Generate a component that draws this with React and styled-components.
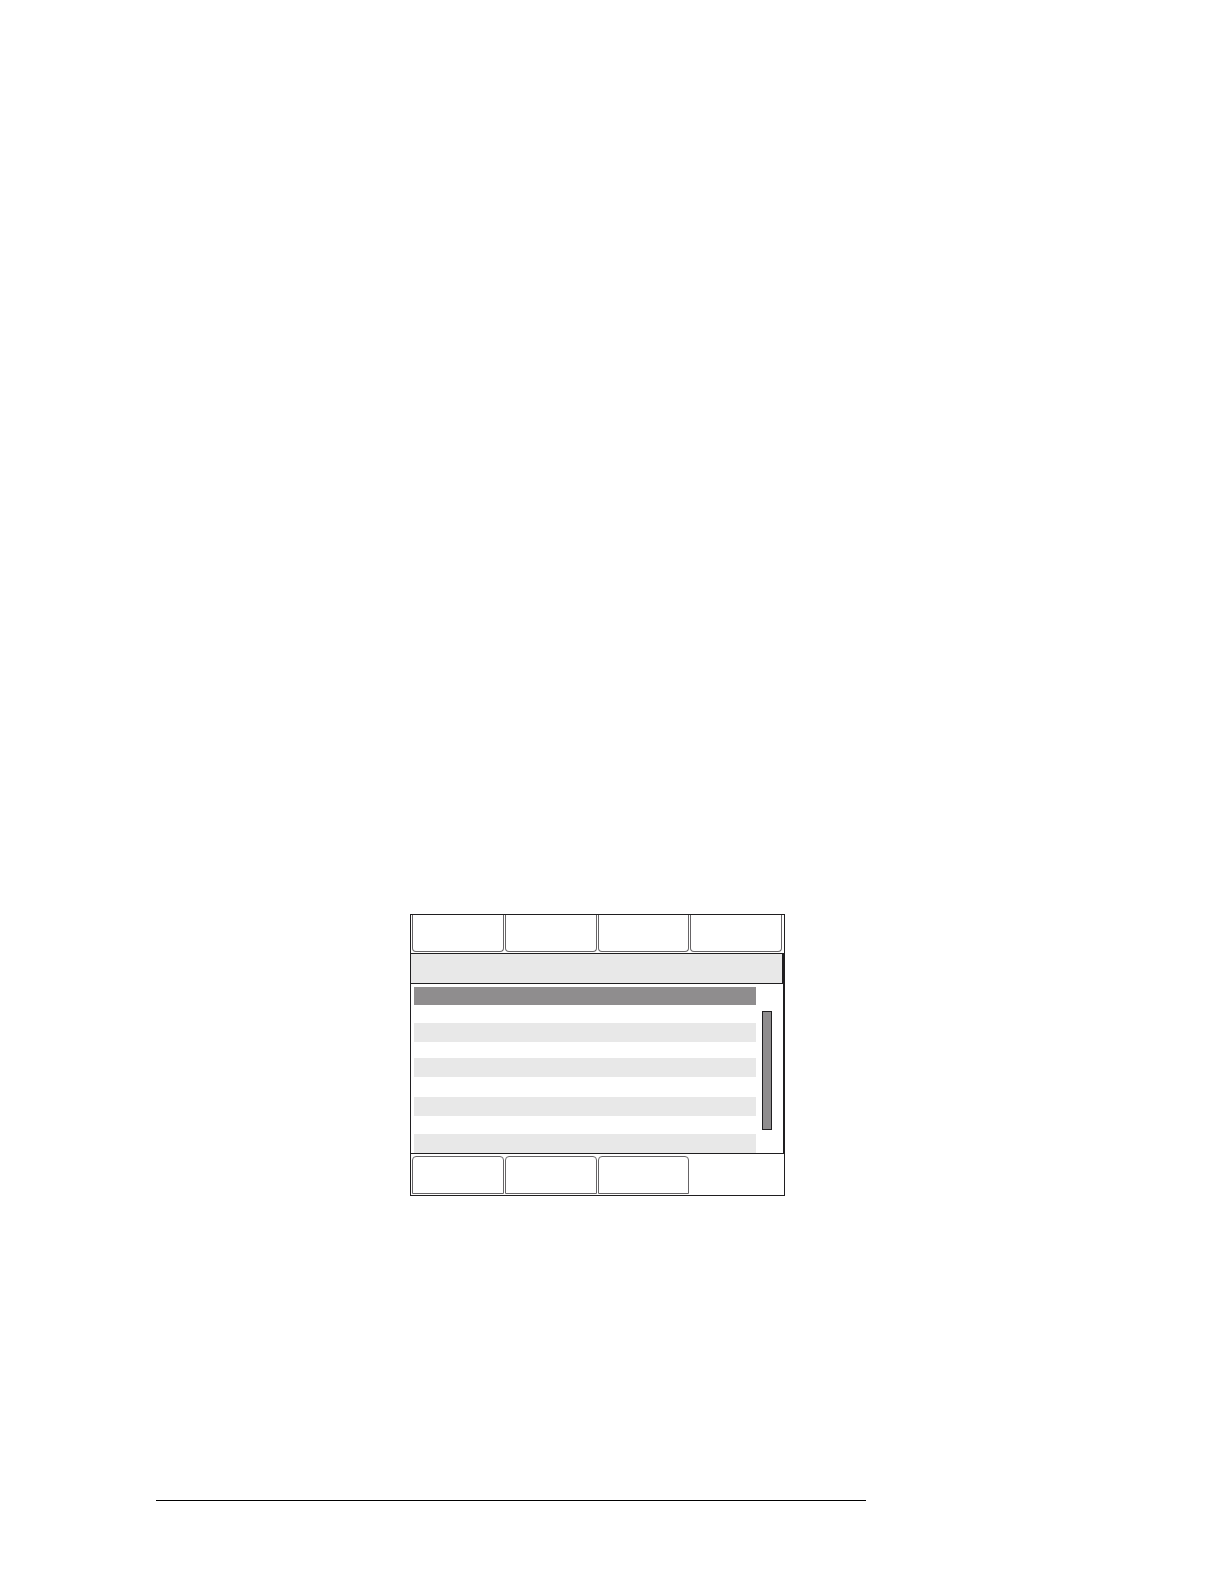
import React from 'react';
import styled, { createGlobalStyle } from 'styled-components';

const colors = {
  line: '#1f1e20',
  key: '#666466',
  selected: '#8f8d8e',
  stripe: '#e8e8e8',
  white: '#ffffff',
};

const topKeys = ['F1', 'F2', 'F3', 'F4'];
const bottomKeys = ['F5', 'F6', 'F7'];
const rows = [0, 1, 2, 3, 4, 5, 6, 7, 8];

const App = () => {
  return (
    <>
      <GlobalStyle />
      <StPage>
        <StScreen>
          <StTopKeys>
            {topKeys.map((key) => (
              <StTopKey key={key} type='button' aria-label={key} />
            ))}
          </StTopKeys>
          <StTitleBar />
          <StBody>
            <StList>
              {rows.map((row) => (
                <StRow key={row} $selected={row === 0} $striped={row % 2 === 0} />
              ))}
            </StList>
            <StScrollThumb />
          </StBody>
          <StBottomKeys>
            {bottomKeys.map((key) => (
              <StBottomKey key={key} type='button' aria-label={key} />
            ))}
          </StBottomKeys>
        </StScreen>
        <StFooterLine />
      </StPage>
    </>
  );
};

export default App;

const GlobalStyle = createGlobalStyle`
  * {
    box-sizing: border-box;
  }

  body {
    margin: 0;
    background: ${colors.white};
    font-family: 'Liberation Sans', sans-serif;
  }
`;

const StPage = styled.main`
  display: flex;
  flex-direction: column;
  justify-content: flex-end;
  min-height: 100vh;
  padding: 0 0 83px 156px;
`;

const StScreen = styled.section`
  width: 100%;
  max-width: 375px;
  margin: 0 0 304px 254px;
  border: 1px solid ${colors.line};
`;

const StKeys = styled.div`
  display: grid;
  grid-template-columns: repeat(4, 1fr);
  gap: 1px;
`;

const StTopKeys = styled(StKeys)`
  padding: 0 2px 1px 1px;
`;

const StBottomKeys = styled(StKeys)`
  padding: 2px 2px 1px 1px;
`;

const StKey = styled.button`
  padding: 0;
  background: ${colors.white};
  border: 1px solid ${colors.key};
`;

const StTopKey = styled(StKey)`
  height: 37px;
  border-top: none;
  border-radius: 0 0 4px 4px;
`;

const StBottomKey = styled(StKey)`
  height: 38px;
  border-radius: 4px 4px 0 0;
`;

const StTitleBar = styled.header`
  height: 31px;
  background: ${colors.stripe};
  border: 1px solid ${colors.line};
  border-width: 1px 2px 1px 0;
`;

const StBody = styled.div`
  display: flex;
  gap: 6px;
  padding: 3px 11px 0 3px;
  border: 1px solid ${colors.line};
  border-width: 0 1px 1px 0;
`;

const StList = styled.ul`
  flex: 1;
  display: grid;
  grid-template-rows: 18px 18px 19px 16px 19px 20px 19px 18px 19px;
  margin: 0;
  padding: 0;
  list-style: none;
`;

const StRow = styled.li`
  background: ${({ $selected, $striped }) =>
    $selected ? colors.selected : $striped ? colors.stripe : colors.white};
`;

const StScrollThumb = styled.div`
  width: 10px;
  margin: 24px 0 23px;
  background: ${colors.selected};
  border: 1px solid ${colors.line};
`;

const StFooterLine = styled.hr`
  width: 710px;
  max-width: 100%;
  height: 1px;
  margin: 0;
  background: #000000;
  border: none;
`;
